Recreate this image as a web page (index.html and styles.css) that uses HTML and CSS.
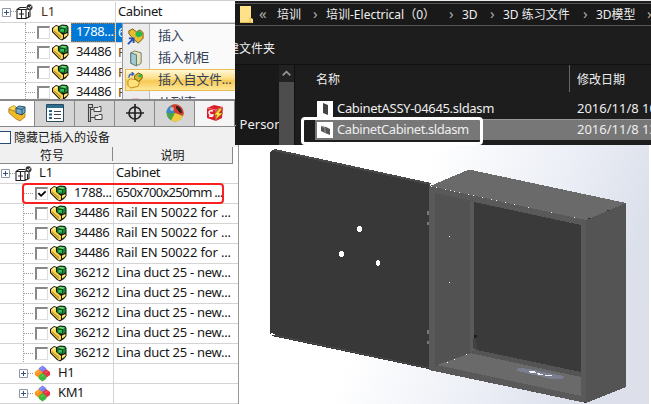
FILE: index.html
```html
<!DOCTYPE html>
<html lang="zh-CN">
<head>
<meta charset="utf-8">
<title>Cabinet</title>
<link rel="stylesheet" href="styles.css">
</head>
<body>
<svg class="defs" aria-hidden="true">
  <symbol id="part" viewBox="0 0 17 17">
    <path d="M0 4 4 1 7 2 10 .5 15 1 16.500 3V11L14 14 10 16.500 7 15 0 8Z" fill="#1c1809"/>
    <path d="M1 4.500 4 2 6 2.500 6 7 11 11V14.500L9 15.500 7 13.500 1 7.500Z" fill="#f8d650"/>
    <path d="M2 4 4 2.500 5.500 3 4 5Z" fill="#fff6b8"/>
    <path d="M1.500 6 9 12V14L1.500 7.500Z" fill="#c2932a"/>
    <path d="M7 3 10 1.500 15 2 15.500 3V7.500L13 9 7.500 8Z" fill="#128a35"/>
    <path d="M8 3 10 2 14.500 2.500 13 4Z" fill="#7fe284"/>
    <path d="M8.500 5H12V7.500H8.500Z" fill="#35c257"/>
    <path d="M7.500 4 12.500 4.500V8.500" fill="none" stroke="#063617" stroke-width=".8"/>
    <path d="M12 10.500 15.500 9V11L13 13 12 13.500Z" fill="#ffe678"/>
  </symbol>
  <symbol id="cabinet" viewBox="0 0 17 16">
    <path d="M1 5.500H10V14.500H1ZM5.500 5V14.500M10 5.500 14 3.500V12.500L10 14.500M1 5.500 4 3.500H10" fill="#fff" stroke="#222" stroke-width="1.100"/>
    <path d="M4 9V11M7 9V11M12.500 8V13" stroke="#222"/>
    <circle cx="13.500" cy="3.300" r="3" fill="#333"/><path d="M12 3 13.300 4.500 15.500 1.500" fill="none" stroke="#fff"/>
  </symbol>
  <symbol id="balls" viewBox="0 0 18 17">
    <path d="M9 0 13 3V6L9 9 5 6V3Z" fill="#7b82f2"/><path d="M5 4 9 7V10L5 13 1 10V7Z" fill="#ff9418"/>
    <path d="M13 4 17 7V10L13 13 9 10V7Z" fill="#e93440"/><path d="M9 8 13 11V14L9 17 5 14V11Z" fill="#3fb83b"/>
    <path d="M7 4 9 2M3 8 5 6M12 8 14 6M8 12 10 10" stroke="#fff" stroke-opacity=".4"/>
  </symbol>
  <symbol id="plus" viewBox="0 0 9 9"><path d="M.5.500H8.500V8.500H.5Z" fill="#fff" stroke="#8e98a5"/><path d="M2 4.500H7M4.500 2V7" stroke="#31517e"/></symbol>
</svg>
<div class="window">
  <div class="top">
    <section class="tree tree-top">
      <div class="row root"><div class="cell key"><svg class="plus"><use href="#plus"/></svg><i class="dots short"></i><svg class="cab"><use href="#cabinet"/></svg><span class="name">L1</span></div><div class="cell cabname">Cabinet</div></div>
      <div class="row selected"><div class="cell key"><i class="dots"></i><i class="check"></i><svg class="part"><use href="#part"/></svg><span class="num">1788...</span></div><div class="cell">6</div></div>
      <div class="row"><div class="cell key"><i class="dots"></i><i class="check"></i><svg class="part"><use href="#part"/></svg><span class="num">34486</span></div><div class="cell">R</div></div>
      <div class="row"><div class="cell key"><i class="dots"></i><i class="check"></i><svg class="part"><use href="#part"/></svg><span class="num">34486</span></div><div class="cell">R</div></div>
      <div class="row"><div class="cell key"><i class="dots"></i><i class="check"></i><svg class="part"><use href="#part"/></svg><span class="num">34486</span></div><div class="cell">R</div></div>
      <div class="menu">
        <div class="item"><svg viewBox="0 0 18 18"><path d="M2 3 6 1 10 4 14 2 17 5V11L12 16 7 12 2 6Z" fill="#e9bd32" stroke="#765512"/><path d="M9 5 13 3 16 5V8L12 10 9 8Z" fill="#28b84a"/><path d="M1 17 6 12M2 11H7V16" fill="none" stroke="#2450b6" stroke-width="2"/></svg><span>插入</span></div>
        <div class="item"><svg viewBox="0 0 18 18"><path d="M4 3 8 1 15 3V14L12 16 4 14Z" fill="#e6e3ba" stroke="#77785d"/><path d="M4 3 10 5V17L4 14Z" fill="#9fcbd1" stroke="#52757b"/></svg><span>插入机柜</span></div>
        <div class="item hot"><svg viewBox="0 0 18 18"><path d="M1 9 4 7 7 8 14 7 12 15 4 17 1 14Z" fill="#ffe07a" stroke="#b98919"/><path d="M8 4 12 1 16 3V7L12 10 8 7Z" fill="#d9b82c" stroke="#665a14"/><path d="M11 4 14 2 16 4 14 6Z" fill="#30ba48"/><path d="M2 6Q2 2 6 2M5 0 7 2 5 4" fill="none" stroke="#3459bc" stroke-width="1.400"/></svg><span>插入自文件...</span></div>
        <div class="item last"><svg viewBox="0 0 18 18"><rect x="4" y="4" width="10" height="12" rx="2" fill="#d72a32"/></svg><span>从列表</span></div>
      </div>
    </section>
    <section class="explorer">
      <div class="address">
        <svg class="folder" viewBox="0 0 13 17"><path d="M0 0H11V12L13 13V17H0Z" fill="#ffe18a"/><path d="M10 11V16M0 16.500H12" stroke="#e5b94c"/></svg>
        <span class="chev">«</span><span>培训</span><span class="chev">›</span><span>培训-Electrical（0）</span><span class="chev">›</span><span>3D</span><span class="chev">›</span><span>3D 练习文件</span><span class="chev">›</span><span>3D模型</span><span class="chev">›</span>
      </div>
      <div class="toolbar"><span>建文件夹</span></div>
      <div class="browser">
        <div class="nav"><span class="person">- Person</span></div>
        <div class="scroll"><svg viewBox="0 0 15 18"><path d="M3.500 11 7.500 7 11.500 11" fill="none" stroke="#969696" stroke-width="1.800"/></svg><div class="thumb"></div></div>
        <div class="files">
          <div class="heads"><span class="h1">名称</span><span class="h2">修改日期</span></div>
          <div class="file"><svg viewBox="0 0 16 16"><path d="M0 0H16V16H0Z" fill="#fff"/><path d="M6 2 11 4V14L6 12Z" fill="#444"/></svg><span class="fn a">CabinetASSY-04645.sldasm</span><span class="date">2016/11/8 10:</span></div>
          <div class="file active"><svg viewBox="0 0 16 16"><path d="M0 0H16V16H0Z" fill="#fff"/><path d="M4 4 9 5 13 7V13L8 11 4 9Z" fill="#555"/><path d="M4 4 8 6V11" fill="none" stroke="#999"/></svg><span class="fn b">CabinetCabinet.sldasm</span><span class="date">2016/11/8 13:</span></div>
          <div class="ring"></div>
        </div>
      </div>
    </section>
  </div>
  <div class="bottom">
    <section class="side">
      <div class="tabs">
        <div class="tab first"><svg viewBox="0 0 18 18"><path d="M1 4 6 1.500 8 3V6L1 8Z" fill="#ffd84e" stroke="#aa7b16" stroke-width=".7"/><path d="M1 5 8 8 10 10 17 8V13L12 17 8 15 1 9Z" fill="#f4b923" stroke="#9d7016" stroke-width=".7"/><path d="M8 4 11 2 17 3V8L14 11 8 9Z" fill="#72abc9" stroke="#27536b"/><path d="M8 4 14 5.500V11M14 5.500 17 3" fill="none" stroke="#27536b"/></svg></div>
        <div class="tab"><svg viewBox="0 0 18 18"><path d="M.5.500H17.500V17.500H.5Z" fill="#fff" stroke="#284b63"/><path d="M1 1H17V4H1Z" fill="#2f6d91"/><path d="M3 7H6M3 10.500H6M3 14H6" stroke="#235f87" stroke-width="2"/><path d="M8 7.500H15M8 10.500H15M8 14.500H15" stroke="#444"/></svg></div>
        <div class="tab"><svg viewBox="0 0 18 18"><path d="M2.500.500H6.500V3.500H2.500ZM4.500 4V8M4.500 5.500H9M4.500 13.500H9M2.500 3.500V17.500H4.500V8" fill="none" stroke="#444" stroke-width="1.100"/><path d="M8 3.500H12L13 2.500H15V7.500H8ZM9 11.500H12L13 10.500H16V15.500H9Z" fill="#eee" stroke="#444"/></svg></div>
        <div class="tab"><svg viewBox="0 0 18 18"><circle cx="9" cy="9" r="6" fill="none" stroke="#222" stroke-width="1.700"/><path d="M9 0V18M0 9H18" stroke="#222" stroke-width="1.700"/></svg></div>
        <div class="tab"><svg viewBox="0 0 18 18"><circle cx="9" cy="9" r="8.500" fill="#49a648"/><path d="M9 9 .5 9A8.500 8.500 0 0 1 5 1.500Z" fill="#3e85c7"/><path d="M5 1.500A8.500 8.500 0 0 1 17 12L9 9Z" fill="#d83a2c"/><path d="M9 9 17 12A8.500 8.500 0 0 1 5 16.500Z" fill="#f3c940"/><path d="M10 2Q15 2 16 9L14 9 10 4Z" fill="#2c2020"/><circle cx="6" cy="5" r="2" fill="#fff" opacity=".5"/></svg></div>
        <div class="tab light"><svg viewBox="0 0 18 18"><path d="M1 4 8 1 17 3 16 14 10 17 1 14Z" fill="#d91f2b"/><path d="M1 4 10 6 17 3M10 6V17" fill="none" stroke="#f17a7d"/><path d="M7 7Q3 6 3 8.500T7 11Q7 13 3 12" fill="none" stroke="#fff" stroke-width="1.400"/><path d="M14 4 8 11H11L9 16 17 9H13L16 5Z" fill="#ffdd3d" stroke="#795910" stroke-width=".5"/></svg></div>
      </div>
      <div class="option"><i></i><span>隐藏已插入的设备</span></div>
      <div class="thead"><span class="th1">符号</span><span class="th2">说明</span></div>
      <div class="tree tree-low">
        <div class="row root"><div class="cell key"><svg class="plus"><use href="#plus"/></svg><i class="dots short"></i><svg class="cab"><use href="#cabinet"/></svg><span class="name">L1</span></div><div class="cell cabname">Cabinet</div></div>
        <div class="row"><div class="cell key"><i class="dots"></i><i class="check on"><svg viewBox="0 0 11 11"><path d="M1.500 4.500 4.500 7.500 9.500 2.500" fill="none" stroke="#000" stroke-width="2"/></svg></i><svg class="part"><use href="#part"/></svg><span class="num">1788...</span></div><div class="cell mm">650x700x250mm ...</div></div>
        <div class="row"><div class="cell key"><i class="dots"></i><i class="check"></i><svg class="part"><use href="#part"/></svg><span class="num">34486</span></div><div class="cell rail">Rail EN 50022 for ...</div></div>
        <div class="row"><div class="cell key"><i class="dots"></i><i class="check"></i><svg class="part"><use href="#part"/></svg><span class="num">34486</span></div><div class="cell rail">Rail EN 50022 for ...</div></div>
        <div class="row"><div class="cell key"><i class="dots"></i><i class="check"></i><svg class="part"><use href="#part"/></svg><span class="num">34486</span></div><div class="cell rail">Rail EN 50022 for ...</div></div>
        <div class="row"><div class="cell key"><i class="dots"></i><i class="check"></i><svg class="part"><use href="#part"/></svg><span class="num">36212</span></div><div class="cell duct">Lina duct 25 - new...</div></div>
        <div class="row"><div class="cell key"><i class="dots"></i><i class="check"></i><svg class="part"><use href="#part"/></svg><span class="num">36212</span></div><div class="cell duct">Lina duct 25 - new...</div></div>
        <div class="row"><div class="cell key"><i class="dots"></i><i class="check"></i><svg class="part"><use href="#part"/></svg><span class="num">36212</span></div><div class="cell duct">Lina duct 25 - new...</div></div>
        <div class="row"><div class="cell key"><i class="dots"></i><i class="check"></i><svg class="part"><use href="#part"/></svg><span class="num">36212</span></div><div class="cell duct">Lina duct 25 - new...</div></div>
        <div class="row"><div class="cell key"><i class="dots"></i><i class="check"></i><svg class="part"><use href="#part"/></svg><span class="num">36212</span></div><div class="cell duct">Lina duct 25 - new...</div></div>
        <div class="row group"><div class="cell key"><svg class="plus"><use href="#plus"/></svg><i class="dots short"></i><svg class="part"><use href="#balls"/></svg><span class="gname">H1</span></div><div class="cell"></div></div>
        <div class="row group"><div class="cell key"><svg class="plus"><use href="#plus"/></svg><i class="dots short"></i><svg class="part"><use href="#balls"/></svg><span class="gname">KM1</span></div><div class="cell"></div></div>
        <div class="marker"></div>
      </div>
    </section>
    <section class="scene">
      <svg viewBox="239 145 410 259" shape-rendering="crispEdges">
        <path d="M270 152 275 149 430 184 431 370 428 369 272 336 270 334Z" fill="#383838"/>
        <path d="M271 151 275 149 431 183 430 185 274 151Z" fill="#494949"/>
        <path d="M274 335 429 368" stroke="#4a4a4a" fill="none"/>
        <path d="M271 333 275 334 274 335 271 335Z" fill="#fff"/>
        <path d="M429 186 586 220V403L429 370Z" fill="#595959"/>
        <path d="M430 186 469 169.500 626 203 586 220Z" fill="#6a6a6a"/>
        <path d="M586 220 626 203V387L586 403Z" fill="#545454"/>
        <path d="M435 193 474 201V353L435 367Z" fill="#525252"/>
        <path d="M470 201 474 202V353H470Z" fill="#5a5a5a"/>
        <path d="M474 202 581 225V373L477 350 474 347Z" fill="#3a3a3a"/>
        <path d="M437 365 471 353 581 377V396Z" fill="#6a6a6a"/>
        <path d="M470 352 477 350 581 372V377L470 353Z" fill="#545454"/>
        <path d="M474 335H477V337H476V339H474Z" fill="#1c1c1c"/>
        <path d="M473 338H476L477 346V350L473 348Z" fill="#424242"/>
        <path d="M516 370 519 368 530 369 548 373 564 376 563 379 551 379 518 371Z" fill="#7b7d91"/>
        <path d="M529 371 534 371 536 373 530 373ZM537 373 543 374 543 375 538 375ZM545 375H552V376H544Z" fill="#f2f5fa"/>
        <g fill="#fff"><ellipse cx="359.500" cy="229" rx="2.500" ry="3"/><ellipse cx="341.300" cy="254" rx="2.500" ry="3"/><ellipse cx="378" cy="263" rx="2" ry="3"/>
        <path d="M449 236h1v1h-1zM449 282h1v1h-1zM454 359h1v1h-1zM447 362h1v1h-1zM466 354h1v1h-1z"/></g>
        <path d="M427 211h2v4h-2zM427 222h2v3h-2zM427 330h2v4h-2zM427 341h2v3h-2z" fill="#777"/>
        <path d="M584 402h2v1h-2zM588 218h2v1h-2zM607 210h2v1h-2z" fill="#292929"/>
      </svg>
    </section>
  </div>
</div>
</body>
</html>
```
FILE: styles.css
```css
* { box-sizing: border-box; }
body { margin: 0; width: 651px; height: 404px; overflow: hidden; background: #fff; color: #171717; font: 13px/20px "Noto Sans", "Noto Sans CJK SC", sans-serif; }
svg { display: block; flex: none; }
.defs { position: absolute; width: 0; height: 0; }
.window { height: 404px; display: flex; flex-direction: column; position: relative; }
.top { height: 99px; display: flex; flex: none; }
.tree-top { position: relative; width: 235px; height: 99px; padding-top: 1px; overflow: hidden; border-top: 1px solid #d0d0d0; flex: none; }
.row { height: 20px; display: flex; border-bottom: 1px solid #d4d4d4; white-space: nowrap; overflow: hidden; }
.cell { padding-left: 2px; line-height: 18px; }
.key { width: 114px; padding-left: 0; display: flex; align-items: center; border-right: 1px solid #d4d4d4; flex: none; }
.tree-top .key { width: 116px; }
.tree-top .cell:not(.key) { color: #804000; }
.tree-top .root .cell:not(.key) { color: #171717; }
.tree-top .row:first-child { height: 21px; }
.plus { width: 9px; height: 9px; }
.root .plus { margin-left: 1px; }
.tree-top .root .plus { margin-left: 2px; }
.dots { width: 11px; height: 20px; margin-left: 23px; border-left: 1px dotted #999; background: repeating-linear-gradient(90deg, #999 0 1px, transparent 1px 2px) 0 9px / 11px 1px no-repeat; flex: none; }
.tree-top .dots { margin-left: 25px; }
.dots.short { width: 5px; margin-left: 0; border: 0; }
.tree-top .dots.short { margin-left: 0; }
.check { width: 13px; height: 13px; margin-left: 1px; border: 1px solid #ddd; border-top: 2px solid #888; border-left: 2px solid #888; background: #fff; flex: none; }
.check svg { width: 10px; height: 10px; }
.part { width: 17px; height: 17px; margin-left: 2px; }
.cab { width: 17px; height: 16px; }
.name { margin-left: 7px; margin-top: -2px; }
.tree-top .name { margin-left: 8px; color: #4a2c12; }
.cabname { letter-spacing: -.4px; }
.num { margin-left: 7px; margin-top: -2px; letter-spacing: -.35px; }
.tree-top .num { margin-left: 2px; margin-top: 0; padding-left: 5px; flex: 1; align-self: stretch; line-height: 17px; }
.tree-top .selected .num { background: #0078d7; color: #fff; border: 1px dotted #c77621; line-height: 15px; padding-left: 4px; }
.selected .cell:not(.key) { background: #0078d7; flex: 1; }
.tree-top .selected .cell:not(.key) { color: #fff; }
.tree-low .cell { line-height: 16px; }
.tree-low .key span { margin-top: -3px; }
.mm { letter-spacing: -.72px; }
.rail { letter-spacing: -.15px; }
.duct { letter-spacing: -.27px; }
.group .plus { margin-left: 19px; }
.group .part { margin-left: 1px; }
.gname { margin-left: 7px; letter-spacing: -.4px; }
.menu { position: absolute; left: 122px; top: 22px; width: 118px; height: 90px; padding: 1px; border: 1px solid #999; background: linear-gradient(90deg, #ececec 26px, #bbb 26px 27px, #fafafa 27px); }
.item { height: 22px; display: flex; align-items: center; padding-left: 3px; gap: 14px; white-space: nowrap; color: #344058; font-size: 13px; letter-spacing: -.25px; }
.item span { margin-top: -2px; }
.item svg { width: 17px; height: 17px; }
.hot { background: linear-gradient(#fff9d9, #fbdc80 45%, #f7c955 55%, #ffe797); border: 1px solid #e9bd54; margin-left: 1px; padding-left: 1px; }
.last { margin-top: 1px; }
.explorer { width: 416px; height: 145px; background: #1d1d1d; color: #eee; flex: none; border-top: 1px solid #eee; overflow: hidden; position: relative; z-index: 1; font-size: 12px; }
.address { height: 23px; margin-top: 2px; border-top: 1px solid #555; border-bottom: 1px solid #555; display: grid; align-items: center; grid-template-columns: 19px 18px 36px 13px 123px 13px 28px 13px 80px 13px 51px 8px; padding-left: 5px; background: #191919; white-space: nowrap; }
.folder { width: 13px; height: 17px; }
.chev { color: #aaa; font-size: 15px; line-height: 16px; margin-top: -3px; }
.toolbar { height: 39px; line-height: 46px; overflow: hidden; border-bottom: 1px solid #111; }
.toolbar span { display: block; margin-left: -8px; }
.browser { display: flex; height: 80px; }
.nav { width: 44px; padding-top: 49px; overflow: hidden; white-space: nowrap; background: #191919; font-size: 13px; }
.person { display: block; margin-left: -3px; }
.scroll { width: 15px; background: #222; flex: none; }
.scroll svg { width: 15px; height: 17px; }
.thumb { height: 63px; background: #4d4d4d; }
.files { position: relative; width: 357px; padding-left: 20px; border-left: 1px solid #111; }
.heads { display: flex; height: 33px; line-height: 29px; }
.h1 { width: 255px; border-right: 1px solid #666; height: 27px; padding-left: 1px; }
.h2 { padding-left: 7px; }
.file { display: flex; align-items: center; height: 21px; padding-left: 2px; white-space: nowrap; overflow: hidden; font-size: 13px; }
.file svg { width: 16px; height: 16px; }
.file span { margin-top: -2px; }
.fn { width: 244px; padding-left: 4px; flex: none; }
.a { letter-spacing: -.33px; }
.b { letter-spacing: -.42px; }
.active { background: #777; border-top: 1px solid #999; }
.ring { position: absolute; left: 6px; top: 52px; width: 182px; height: 28px; border: 3px solid #fff; border-radius: 4px; }
.bottom { display: flex; height: 305px; }
.side { width: 239px; background: #fff; border-right: 1px solid #999; flex: none; }
.tabs { display: flex; height: 28px; border-top: 2px solid #888; border-bottom: 1px solid #888; width: 235px; }
.tab { width: 40px; border-right: 1px solid #888; background: #d5d5d5; display: grid; place-items: center; }
.tab.first { width: 35px; background: #fff; }
.tab.light { background: #f5f5f5; }
.tab svg { width: 18px; height: 18px; margin-top: -1px; }
.option { height: 20px; display: flex; align-items: center; gap: 3px; font-size: 12px; background: #f0f0f0; }
.option i { width: 11px; height: 13px; border: 1px solid #244b7a; border-left: 0; background: #fff; }
.option span { padding-top: 2px; }
.thead { width: 233px; height: 17px; display: flex; background: #f0f0f0; border: solid #888; border-width: 0 1px 1px 0; line-height: 17px; text-align: center; font-size: 12px; }
.th1 { width: 113px; height: 14px; border-right: 1px solid #888; padding-right: 8px; }
.th2 { flex: 1; }
.tree-low { position: relative; width: 238px; }
.marker { position: absolute; left: 22px; top: 19px; width: 202px; height: 21px; border: 2px solid #fb2020; border-radius: 4px; }
.scene { width: 410px; height: 259px; margin-top: 46px; background: linear-gradient(112deg, #fff 0 38%, #eceff6 65%, #dce0eb 85%, #dde0e9); }
.scene svg { width: 410px; height: 259px; }
```
